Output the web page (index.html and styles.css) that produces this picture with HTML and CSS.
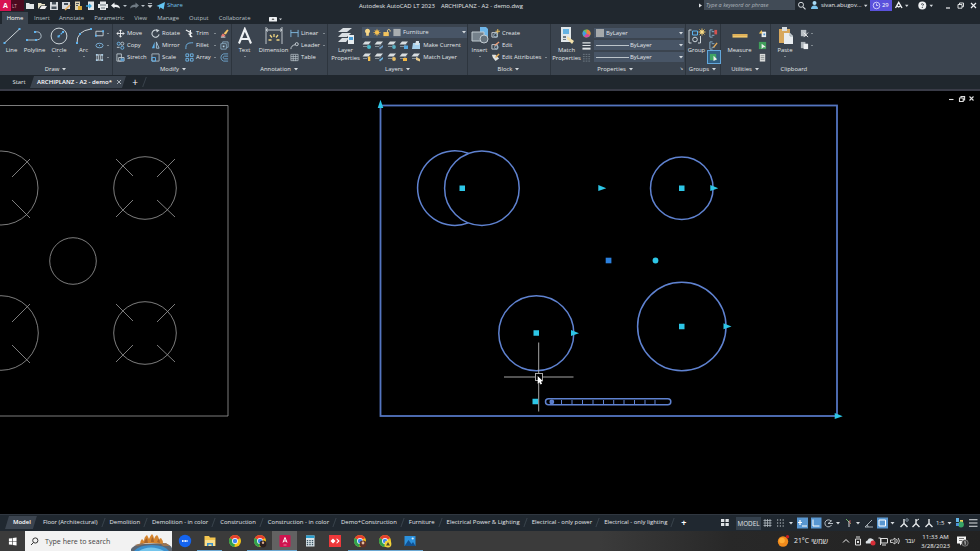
FILE: index.html
```html
<!DOCTYPE html>
<html lang="en">
  <head>
    <meta charset="UTF-8" />
    <meta name="viewport" content="width=device-width, initial-scale=1.0" />
    <title>Autodesk AutoCAD LT 2023 - ARCHIPLANZ - A2 - demo.dwg</title>
    <link rel="stylesheet" href="styles.css">
  </head>
  <body>
    <!-- shared icons -->
    <svg class="sprite">
      <symbol id="caret" viewBox="0 0 6 6"><path d="M1 2h4L3 4.6z" fill="#d5dade" /></symbol>
      <symbol id="layer" viewBox="0 0 10 10">
        <path d="M3 1.500h6L6.500 4.500H.5z" fill="#d8dde0" /><path d="M1 6.500l4 0 2-2" stroke="#98a2aa" fill="none" stroke-width=".8" />
      </symbol>
      <symbol id="chrome" viewBox="0 0 14 14">
        <circle cx="7" cy="7" r="6" fill="#f5c518" />
        <path d="M7 7L1.800 4A6 6 0 0 1 12.200 4z" fill="#e5402f" />
        <path d="M7 7L1.800 4A6 6 0 0 0 6.500 13z" fill="#2fa14f" />
        <circle cx="7" cy="7" r="2.900" fill="#fff" /><circle cx="7" cy="7" r="2.200" fill="#4285f4" />
      </symbol>
    </svg>

    <header class="titlebar">
      <div class="app-button"><b>A</b><span>LT</span></div>
      <div class="quick">
        <svg width="12" viewBox="0 0 12 12"><path d="M2 3h3l1 1h4v5H2z" fill="#e2e6e8" /></svg>
        <svg width="12" viewBox="0 0 12 12"><path d="M2 9V3h3l1 1h3v1.500H5z" fill="#e8e3c8" /><path d="M3.500 9L5.500 6H11L9 9z" fill="#eee" /></svg>
        <svg width="12" viewBox="0 0 12 12"><path d="M2 2h8v8H2z" fill="#d6dade" /><path d="M4 2h4v2.500H4zM3.500 6.500h5V9h-5z" fill="#46515a" /></svg>
        <svg width="12" viewBox="0 0 12 12"><path d="M2 2h8v7H2z" fill="#d6dade" /><path d="M4 3h4v2H4z" fill="#46515a" /><path d="M5 10l5-5" stroke="#e9ae58" stroke-width="1.600" /></svg>
        <svg width="12" viewBox="0 0 12 12"><path d="M3 1.500h5V10H3z" fill="#ded3b1" /><path d="M6 6h4v4H6z" fill="#d6a736" /><path d="M4 3.500h3M4 5.500h2" stroke="#50585d" /></svg>
        <svg width="13" viewBox="0 0 13 12"><path d="M4 1.500h6V10H4z" fill="#e2e6e8" /><path d="M2 6h5M5 4l2 2-2 2" stroke="#3aa7dc" stroke-width="1.300" fill="none" /></svg>
        <svg width="12" viewBox="0 0 12 12"><path d="M3 1.500h6V4h2v4H9v2H3V8H1V4h2z" fill="#e4e8ea" /><path d="M3 5h6M4 8h4" stroke="#68747c" /></svg>
        <svg width="13" viewBox="0 0 13 12"><path d="M2 5.500l3.500-3v2q5 0 5.500 4-2-2-5.500-1.500v1.500z" fill="#eef1f3" /></svg>
        <svg width="6" viewBox="0 0 6 12"><path d="M1 5h4L3 7z" fill="#b7c0c6" /></svg>
        <svg width="13" viewBox="0 0 13 12"><path d="M11 5.500l-3.500-3v2q-5 0-5.500 4 2-2 5.500-1.500v1.500z" fill="#6f7a83" /></svg>
        <svg width="6" viewBox="0 0 6 12"><path d="M0 5h4L2 7z" fill="#b7c0c6" /></svg>
        <svg width="9" viewBox="0 0 9 12"><path d="M1 3.500h4M1 5.500h4L3 7.600z" stroke="#d5dade" fill="#d5dade" stroke-width=".7" /></svg>
        <svg class="plane" width="9" viewBox="0 0 9 12"><path d="M.5 6L9 2 7.600 9.500 4.500 7.600 3.400 9.500 3 6.800z" fill="#63c4f1" /></svg>
        <span class="share">Share</span>
      </div>
      <div class="doc-title"><span>Autodesk AutoCAD LT 2023</span><span>ARCHIPLANZ - A2 - demo.dwg</span></div>
      <div class="info">
        <svg width="6" viewBox="0 0 6 12"><path d="M2 3.500l3 2-3 2z" fill="#dfe3e6" /></svg>
        <div class="keyword">Type a keyword or phrase</div>
        <svg width="14" viewBox="0 0 14 12"><circle cx="6" cy="4.800" r="2.500" fill="none" stroke="#d5dade" /><path d="M8 6.800l2.500 2.500" stroke="#d5dade" stroke-width="1.200" /></svg>
        <svg width="12" viewBox="0 0 12 12"><circle cx="5.500" cy="3" r="2" fill="#a9dcf7" /><path d="M2 9q0-3.500 3.500-3.500T9 9z" fill="#7cc4ec" /></svg>
        <span class="user">sivan.abugov...</span>
        <svg width="8" viewBox="0 0 8 12"><path d="M2 4.800h3.500L3.700 7z" fill="#d5dade" /></svg>
        <div class="trial">
          <svg width="9" viewBox="0 0 9 9"><circle cx="4.500" cy="4.500" r="3.300" fill="none" stroke="#e7e6ff" stroke-width=".8" /><path d="M4.500 2.500v2h1.700" stroke="#e7e6ff" fill="none" stroke-width=".8" /></svg>
          <span>29</span>
        </div>
        <svg width="20" viewBox="0 0 20 12"><path d="M3.500 8L6.700 2.500 10 8M5 6l1.700 1L8.500 6" stroke="#f0f2f4" fill="none" stroke-width="1.400" /><path d="M13 4.800h3.500L14.800 7z" fill="#d5dade" /></svg>
        <svg class="help-icon" width="20" viewBox="0 0 20 12"><circle cx="6.300" cy="5.500" r="4" fill="#eef0f2" /><path d="M5 4.500q1.300-1.500 2.400-.3Q8 5 6.300 6M6.300 7v1" stroke="#1f272f" fill="none" stroke-width=".8" /><path d="M13.500 4.800H17L15.300 7z" fill="#d5dade" /></svg>
        <svg class="window-buttons" width="38" viewBox="0 0 38 12"><path d="M5 8h4" stroke="#eef0f2" stroke-width="1.200" /><path d="M17 4.500h4v3.700h-4zM18.500 4.500V3h4v3.700H21" stroke="#eef0f2" fill="none" stroke-width=".9" /><path d="M30 3l5 5M35 3l-5 5" stroke="#eef0f2" stroke-width="1.200" /></svg>
      </div>
    </header>

    <nav class="ribbon-tabs">
      <span class="tab active">Home</span>
      <span class="tab">Insert</span>
      <span class="tab">Annotate</span>
      <span class="tab">Parametric</span>
      <span class="tab">View</span>
      <span class="tab">Manage</span>
      <span class="tab">Output</span>
      <span class="tab">Collaborate</span>
      <svg width="16" height="12" viewBox="0 0 16 12"><rect x="0" y="5" width="8" height="4.600" rx=".6" fill="#edf0f2" /><path d="M2.500 7.800l1.500-1.500 1.500 1.500z" fill="#333" /><path d="M10 6.500h3l-1.500 1.800z" fill="#d5dade" /></svg>
    </nav>

    <section class="ribbon">
      <div class="panel draw">
        <div class="panel-body">
          <button class="big"><svg viewBox="0 0 18 18"><path d="M1.500 16L16.500 2" stroke="#cfd6da" /><path d="M.5 15h2v2h-2zM15.500 1h2v2h-2z" fill="#5db3ef" /></svg>Line</button>
          <button class="big"><svg viewBox="0 0 18 18"><path d="M1 13h10q5-1 4-5-1-4-6-3" stroke="#aab8c2" fill="none" /><path d="M0 12h2v2H0zM9 12h2v2H9zM8 4h2v2H8z" fill="#5db3ef" /></svg>Polyline</button>
          <button class="big"><svg viewBox="0 0 18 18"><circle cx="9" cy="9" r="7.900" stroke="#ccd4d9" fill="none" /><path d="M8.500 9.500L13 5" stroke="#5db3ef" stroke-width="1.200" stroke-dasharray="2 1" /><path d="M7.500 8.500h2v2h-2zM12 4h2v2h-2z" fill="#5db3ef" /></svg>Circle<i class="drop"></i></button>
          <button class="big"><svg viewBox="0 0 18 18"><path d="M2 16Q1.500 4 16 2" stroke="#ccd4d9" fill="none" /><path d="M1 15h2v2H1zM4 6h2v2H4zM15 1h2v2h-2z" fill="#5db3ef" /></svg>Arc<i class="drop"></i></button>
          <div class="stack">
            <span><svg viewBox="0 0 10 10"><path d="M1 2.500h8v5H1z" stroke="#ccd4d9" fill="none" /><path d="M0 6.500h2v2H0zM8 1.500h2v2H8z" fill="#5db3ef" /></svg><i class="drop"></i></span>
            <span><svg viewBox="0 0 10 10"><ellipse cx="5" cy="5" rx="4" ry="2.500" stroke="#7fb5dc" fill="none" /><path d="M4.500 4.500h1v1h-1z" fill="#5db3ef" /></svg><i class="drop"></i></span>
            <span><svg viewBox="0 0 10 10"><path d="M2 2h6v6H2zM4 2v6M6 2v6" stroke="#b9c3ca" fill="none" /><path d="M1 1h2v2H1zM7 1h2v2H7zM1 7h2v2H1zM7 7h2v2H7z" fill="#a9cce4" /></svg><i class="drop"></i></span>
          </div>
        </div>
        <div class="caption">Draw <svg><use href="#caret" /></svg></div>
      </div>

      <div class="panel modify">
        <div class="panel-body">
          <div class="stack col-a">
            <span><svg viewBox="0 0 10 10"><path d="M5 1v8M1 5h8M3.500 2.500L5 1l1.500 1.500M3.500 7.500L5 9l1.500-1.500M2.500 3.500L1 5l1.500 1.500M7.500 3.500L9 5 7.500 6.500" stroke="#eef1f3" fill="none" /></svg>Move</span>
            <span><svg viewBox="0 0 10 10"><circle cx="3" cy="3" r="1.700" stroke="#71b8ea" fill="none" /><circle cx="7" cy="3" r="1.700" stroke="#bcc6cd" fill="none" /><circle cx="7" cy="7.500" r="1.700" stroke="#71b8ea" fill="none" /><path d="M1 7h3" stroke="#ccd4d9" /></svg>Copy</span>
            <span><svg viewBox="0 0 10 10"><path d="M1 1h5v8H1zM3 5h6v4H3z" stroke="#bcc6cd" fill="none" /><path d="M5 6h4v3H5z" fill="#5c9cce" /></svg>Stretch</span>
          </div>
          <div class="stack col-b">
            <span><svg viewBox="0 0 10 10"><path d="M7.500 2A4 4 0 1 0 9 6" stroke="#ccd4d9" fill="none" stroke-width="1.200" /><path d="M5.500 0l4 1.500-3 2.500z" fill="#ccd4d9" /></svg>Rotate</span>
            <span><svg viewBox="0 0 10 10"><path d="M4 1v7H1z" fill="#5db3ef" /><path d="M6 1v7h3z" fill="none" stroke="#a9c7dc" /></svg>Mirror</span>
            <span><svg viewBox="0 0 10 10"><path d="M1 1h8v8H1z" stroke="#aab8c2" fill="none" /><path d="M1 5h4v4H1z" stroke="#5db3ef" fill="none" /></svg>Scale</span>
          </div>
          <div class="stack col-c">
            <span><svg viewBox="0 0 10 10"><path d="M1 1l7 4M6 1v8M4 5l4 4" stroke="#eef1f3" stroke-width="1.300" /></svg><em>Trim</em><i class="drop"></i></span>
            <span><svg viewBox="0 0 10 10"><path d="M1 9V7q0-5 6-5h2" stroke="#71b8ea" fill="none" /></svg><em>Fillet</em><i class="drop"></i></span>
            <span><svg viewBox="0 0 10 10"><path d="M1 1h3v3H1zM6 1h3v3H6zM1 6h3v3H1zM6 6h3v3H6z" stroke="#71b8ea" fill="none" /></svg><em>Array</em><i class="drop"></i></span>
          </div>
          <div class="stack">
            <span><svg viewBox="0 0 10 10"><path d="M4 5l4-4.500 1.500 1L6.500 6z" fill="#f4c465" /><path d="M3 5l3 2-2 2-3-1z" fill="#ec796f" /><path d="M1 9h5" stroke="#eee" /></svg></span>
            <span><svg viewBox="0 0 10 10"><path d="M1 3h6v6H1zM3 3V1h6v6H7" stroke="#88a9c1" fill="none" /><path d="M3 5h2v2H3z" fill="#b3d3e9" /></svg></span>
            <span><svg viewBox="0 0 10 10"><path d="M9 1H4Q1 2 1 5t3 4h5M9 3.500H5Q3.500 4 3.500 5T5 6.500h4" stroke="#71a9d2" fill="none" /></svg></span>
          </div>
        </div>
        <div class="caption">Modify <svg><use href="#caret" /></svg></div>
      </div>

      <div class="panel annotation">
        <div class="panel-body">
          <button class="big"><svg viewBox="0 0 18 18"><path d="M3 16.500L8.800 2 15 16.500M5.200 12h7.300" stroke="#eef1f3" stroke-width="2.100" fill="none" /></svg>Text<i class="drop"></i></button>
          <button class="big dimension"><svg viewBox="0 0 18 18"><path d="M1 0v17M17 0v17M1 3h16M3 1.500L1 3l2 1.500M15 1.500L17 3l-2 1.500" stroke="#cfd6da" fill="none" stroke-width=".9" /><path d="M9 7v3M5 8l2 2.500M13 8l-2 2.500M3.500 13h3M11.500 13h3" stroke="#efd481" stroke-width="1.300" /></svg>Dimension</button>
          <div class="stack">
            <span><svg viewBox="0 0 10 10"><path d="M1 1v8M9 1v8M1 4h8" stroke="#83bce5" fill="none" /></svg><em>Linear</em><i class="drop"></i></span>
            <span><svg viewBox="0 0 10 10"><path d="M1 9q0-4 5-5" stroke="#ccd4d9" fill="none" /><circle cx="7.500" cy="3.500" r="1.700" stroke="#ccd4d9" fill="none" /></svg><em>Leader</em><i class="drop"></i></span>
            <span><svg viewBox="0 0 10 10"><path d="M1 1.500h8v7H1zM1 4h8M1 6.300h8M3.600 2v7M6.300 2v7" stroke="#b9c3ca" fill="none" stroke-width=".8" /></svg>Table</span>
          </div>
        </div>
        <div class="caption">Annotation <svg><use href="#caret" /></svg></div>
      </div>

      <div class="panel layers">
        <div class="panel-body">
          <button class="big"><svg viewBox="0 0 18 18"><path d="M6 1h9l-5 4H1zM5 6h9l-4 4H1zM5 11h7l-3 4H1z" fill="#d9dee2" /><path d="M11 8h6v9h-6z" fill="#e8edf0" /><path d="M12 10h4v3h-4z" fill="#4a9ed8" /></svg>Layer<br />Properties</button>
          <div class="layer-tools">
            <div class="combo">
              <svg width="9" viewBox="0 0 9 10"><path d="M4.500.8a2.700 2.700 0 0 1 1.500 5v2.700H3V5.800a2.700 2.700 0 0 1 1.500-5z" fill="#f8d888" /></svg>
              <svg width="10" viewBox="0 0 10 10"><circle cx="5" cy="5" r="2.400" fill="#f5c052" /><path d="M5 1v8M1 5h8M2.200 2.200l5.600 5.600M7.800 2.200L2.200 7.800" stroke="#f5c052" stroke-width=".7" /></svg>
              <svg width="10" viewBox="0 0 10 10"><path d="M1 4.500h6V9H1z" fill="#f3c35d" /><path d="M5.500 5V2.500q1.500-2 3 0V4" stroke="#f3d895" fill="none" /></svg>
              <svg width="10" viewBox="0 0 10 10"><path d="M1 1h8v8H1z" fill="#a9aeb0" /></svg>
              <span>Furniture</span>
              <svg class="caret"><use href="#caret" /></svg>
            </div>
            <div class="layer-row">
              <svg viewBox="0 0 10 10"><use href="#layer" /><circle cx="7" cy="7" r="2" fill="#46bacb" /></svg>
              <svg viewBox="0 0 10 10"><use href="#layer" /><path d="M5 8l4-3v2L6 9.500z" fill="#6f9cc4" /></svg>
              <svg viewBox="0 0 10 10"><use href="#layer" /><circle cx="7" cy="7" r="1.900" fill="#57b1c3" /></svg>
              <svg viewBox="0 0 10 10"><use href="#layer" /><path d="M5 5.500h4v3.500H5z" fill="#54a8e2" /></svg>
              <svg viewBox="0 0 10 10"><path d="M2 3h7v6H1z" fill="#a6d1ed" /><path d="M5 1h3v4H4z" fill="#d6e1e8" /></svg>
              <span>Make Current</span>
            </div>
            <div class="layer-row">
              <svg viewBox="0 0 10 10"><use href="#layer" /><path d="M6 4.500h2.300V9H6z" fill="#f5c052" /></svg>
              <svg viewBox="0 0 10 10"><use href="#layer" /><path d="M5 8l4-3v2L6 9.500z" fill="#6eb2dc" /></svg>
              <svg viewBox="0 0 10 10"><use href="#layer" /><circle cx="7" cy="7" r="1.900" fill="#e8be63" /></svg>
              <svg viewBox="0 0 10 10"><use href="#layer" /><path d="M4 6h4v3H4z" fill="#f3b946" /></svg>
              <svg viewBox="0 0 10 10"><use href="#layer" /><path d="M5 5l4 2v2.500L5 8z" fill="#e8ca8c" /></svg>
              <span>Match Layer</span>
            </div>
          </div>
        </div>
        <div class="caption">Layers <svg><use href="#caret" /></svg></div>
      </div>

      <div class="panel block">
        <div class="panel-body">
          <button class="big"><svg viewBox="0 0 18 18"><path d="M9 0h6l2 2v10H9z" fill="#6fb6e9" /><path d="M1 5h12v9H1z" fill="#75818b" stroke="#c2cbd1" /><circle cx="13" cy="12" r="4" fill="#66727c" stroke="#c2cbd1" /></svg>Insert<i class="drop"></i></button>
          <div class="stack">
            <span><svg viewBox="0 0 10 10"><path d="M1 4h6v5H1z" stroke="#ccd4d9" fill="none" /><circle cx="5" cy="7" r="2" stroke="#9bb9cc" fill="none" /><path d="M7.500 0v5M5 2.500h5" stroke="#f0c45c" /></svg>Create</span>
            <span><svg viewBox="0 0 10 10"><path d="M1 4h6v5H1z" stroke="#ccd4d9" fill="none" /><circle cx="6" cy="7" r="2" stroke="#9bb9cc" fill="none" /><path d="M4 5l5-4" stroke="#ee9d76" stroke-width="1.400" /></svg>Edit</span>
            <span><svg viewBox="0 0 10 10"><path d="M1 2h4l4 4-4 3-3-4z" fill="#e0e3e2" /><path d="M5 5l4-4" stroke="#e9ae58" stroke-width="1.600" /></svg>Edit Attributes<i class="drop"></i></span>
          </div>
        </div>
        <div class="caption">Block <svg><use href="#caret" /></svg></div>
      </div>

      <div class="panel properties">
        <div class="panel-body">
          <button class="big"><svg viewBox="0 0 18 18"><path d="M3 0h10v15H3z" fill="#e1e7ea" /><path d="M5 2h6v5H5z" fill="#65b3e3" /><path d="M5 9h3v2H5zM5 12h3v1H5z" fill="#707d86" /><path d="M9 9l7 5-2 3-5-5z" fill="#f3e1ac" /></svg>Match<br />Properties</button>
          <div class="stack prop-icons">
            <span><svg viewBox="0 0 10 10"><circle cx="5" cy="5" r="4.400" fill="#67c25d" /><path d="M5 5V.6A4.400 4.400 0 0 1 9 7z" fill="#f0803f" /><path d="M5 5L9 7A4.400 4.400 0 0 1 2 8z" fill="#d7479d" /><path d="M5 5L2 8A4.400 4.400 0 0 1 2 2z" fill="#4498e8" /></svg></span>
            <span><svg viewBox="0 0 10 10"><path d="M.5 2h9M.5 5h9" stroke="#dfe3e5" stroke-width="1.300" /><path d="M.5 8.500h9" stroke="#dfe3e5" stroke-width="2.200" /></svg></span>
            <span><svg viewBox="0 0 10 10"><path d="M1 1.500h8M1 4h8M1 6.500h8M1 9h8" stroke="#78838c" stroke-dasharray="2 1" stroke-width=".9" /></svg></span>
          </div>
          <div class="prop-combos">
            <div class="combo"><i class="swatch"></i><span>ByLayer</span><svg class="caret"><use href="#caret" /></svg></div>
            <div class="combo"><i class="rule"></i><span>ByLayer</span><svg class="caret"><use href="#caret" /></svg></div>
            <div class="combo"><i class="rule"></i><span>ByLayer</span><svg class="caret"><use href="#caret" /></svg></div>
          </div>
        </div>
        <div class="caption">Properties <svg><use href="#caret" /></svg><b class="launcher">&#x2198;</b></div>
      </div>

      <div class="panel groups">
        <div class="panel-body">
          <button class="big"><svg viewBox="0 0 18 18"><path d="M3.500 3H1v13h2.500M10 16h2.500V9" stroke="#ccd4d9" fill="none" /><path d="M4.500 4h5v4h-5z" stroke="#5db3ef" fill="none" /><circle cx="7" cy="12.500" r="2.300" stroke="#ccd4d9" fill="none" /><path d="M14 1.500v7M10.500 5h7M11.500 2.500l5 5M16.500 2.500l-5 5" stroke="#f4cb67" stroke-width=".9" /><circle cx="14" cy="5" r="1.800" fill="#f8dc8c" /></svg>Group</button>
          <div class="stack">
            <span><svg viewBox="0 0 10 10"><path d="M4 1H1v8h3M3 3h3M3 7h3" stroke="#8bb6d4" fill="none" /><path d="M6 1h3v5H6z" fill="#d65250" /></svg></span>
            <span><svg viewBox="0 0 10 10"><path d="M4 1H1v8h3M3 3h3M3 7h3" stroke="#8bb6d4" fill="none" /><path d="M5 7l4-5" stroke="#e9ae58" stroke-width="1.500" /></svg></span>
            <span class="pressed"><svg viewBox="0 0 10 10"><path d="M1 1h7v7H1z" fill="#40a563" /><path d="M5 3v6l4-2z" fill="#eee" /></svg></span>
          </div>
        </div>
        <div class="caption">Groups <svg><use href="#caret" /></svg></div>
      </div>

      <div class="panel utilities">
        <div class="panel-body">
          <button class="big"><svg viewBox="0 0 18 18"><path d="M1.500 7h15v3.600h-15z" fill="#f2c76b" /><path d="M3 7v2M5 7v2M7 7v2M9 7v2M11 7v2M13 7v2M15 7v2" stroke="#b38231" stroke-width=".6" /></svg>Measure<i class="drop"></i></button>
          <div class="stack">
            <span><svg viewBox="0 0 10 10"><path d="M4 3h5v6H4z" fill="#e8edf0" /><path d="M1 5h4L4 1z" fill="#f0c45c" /><path d="M6 5h2v2H6z" fill="#4b91ca" /></svg></span>
            <span><svg viewBox="0 0 10 10"><path d="M1 1h8v8H1z" fill="#3f9e5a" /><path d="M4 3v6l2-2h3z" fill="#eee" /></svg></span>
            <span><svg viewBox="0 0 10 10"><path d="M2 1h6v8.500H2z" fill="#d9dbda" /><path d="M3 3h4M3 5h4M3 7h4" stroke="#7b8183" stroke-width=".8" /></svg></span>
          </div>
        </div>
        <div class="caption">Utilities <svg><use href="#caret" /></svg></div>
      </div>

      <div class="panel clipboard">
        <div class="panel-body">
          <button class="big"><svg viewBox="0 0 18 18"><path d="M3 2h11v14H3z" fill="#d8a85d" /><path d="M6 0h5v4H6z" fill="#d9dee2" /><path d="M8 6h6l3 3v8H8z" fill="#e9edf0" /><path d="M14 6v3h3" stroke="#9ca6ac" fill="none" /></svg>Paste<i class="drop"></i></button>
          <div class="stack">
            <span><svg viewBox="0 0 10 10"><path d="M1 1h6v7H1z" fill="#b9c0c5" /><path d="M4 4l5 5M9 4L4 9" stroke="#eee" /></svg><i class="drop"></i></span>
            <span><svg viewBox="0 0 10 10"><path d="M1 1h5v7H1z" fill="#aeb5ba" /><path d="M4 3h5v6H4z" fill="#eceff1" /></svg><i class="drop"></i></span>
          </div>
        </div>
        <div class="caption">Clipboard</div>
      </div>
    </section>

    <div class="file-tabs">
      <span class="file-tab start">Start</span>
      <span class="file-tab current">ARCHIPLANZ - A2 - demo* <svg viewBox="0 0 6 6"><path d="M1 1l4 4M5 1L1 5" stroke="#c4cbd0" stroke-width=".8" /></svg></span>
      <span class="new-tab">+</span>
      <i class="slash"></i>
    </div>

    <!-- model space; the viewBox keeps window coordinates -->
    <main class="drawing">
      <svg width="980" height="423" viewBox="0 91 980 423">
        <g class="plain">
          <path d="M0 105.500H228V416H0" />
          <circle cx="1" cy="188" r="37" />
          <circle cx="145" cy="188" r="31.300" />
          <circle cx="73" cy="261" r="23.300" />
          <circle cx="1" cy="333" r="37.300" />
          <circle cx="145" cy="333" r="31.300" />
          <path d="M12 177L30 159M12 200L30 218M116 159l17 17M175 159l-18 18M116 217l17-17M175 217l-18-17" />
          <path d="M12 322L30 304M12 345L30 363M116 304l17 17M175 304l-18 18M116 362l17-17M175 362l-18-17" />
        </g>
        <g class="selected">
          <rect class="outline" x="380.500" y="105.500" width="456.500" height="310.500" />
          <path d="M468.300 153.300a37.300 37.300 0 1 0 0 69.600" />
          <circle cx="481.900" cy="188.200" r="37.300" />
          <circle cx="681.800" cy="188.200" r="31.300" />
          <circle cx="536.300" cy="333.200" r="37.500" />
          <circle cx="681.800" cy="326.500" r="44.200" />
          <rect x="545.500" y="398.700" width="125.300" height="6" rx="3" />
          <circle class="knob" cx="551.800" cy="401.900" r="1.700" />
          <path class="ticks" d="M561.500 400v4M572 400v4M582.500 400v4M593 400v4M603.500 400v4M613.700 400v4M624 400v4M634.500 400v4M645 400v4M655 400v4" />
        </g>
        <g class="grips">
          <path d="M459.500 185.500h5.500v5.500h-5.500zM679 185.500h5.500v5.500H679zM533.500 330.300h5.500v5.500h-5.500zM679 323.800h5.500v5.500H679zM532.500 398.800h5.500v5.500h-5.500z" />
          <path d="M598.300 185v6l8-2.800zM710.300 185v6l8-2.800zM571 330v6l8-2.800zM723.500 323.300v6l8-2.800zM834.700 413v6l8-2.800zM377.700 108h5.600L380.500 99.700z" />
          <circle cx="655.500" cy="260.500" r="2.900" />
          <path class="base" d="M605.700 257.700h5.700v5.600h-5.700z" />
        </g>
        <g class="crosshair">
          <path d="M504 377h31.500M542.500 377H573.500M538.700 342.500v31M538.700 381v30.500" />
          <rect x="535.500" y="373.500" width="7" height="7" />
          <path class="pointer" d="M537.700 376v7.800l1.600-1.500 1.300 2.300 1.500-.8-1.200-2.200 2.100-.4z" />
        </g>
        <g class="mdi">
          <path d="M949 99.500h4.500" />
          <path d="M959.500 98h3.700v3.500h-3.700zM961 98v-1.500h3.600v3.400H963" />
          <path d="M969.500 96.500l4 4M973.500 96.500l-4 4" />
        </g>
      </svg>
    </main>

    <div class="layout-bar">
      <div class="layout-tabs">
        <span class="active">Model</span>
        <span>Floor (Architectural)</span>
        <span>Demolition</span>
        <span>Demolition - in color</span>
        <span>Construction</span>
        <span>Construction - in color</span>
        <span>Demo+Construction</span>
        <span>Furniture</span>
        <span>Electrical Power &amp; Lighting</span>
        <span>Electrical - only power</span>
        <span>Electrical - only lighting</span>
        <b>+</b>
      </div>
      <div class="status">
        <svg width="18" viewBox="0 0 18 16"><path d="M3 4h3.300v3H3zM7.500 4h3.300v3H7.500zM3 8h3.300v3H3zM7.500 8h3.300v3H7.500z" fill="#dfe3e6" /></svg>
        <span class="model-button">MODEL</span>
        <svg width="13" viewBox="0 0 13 16"><path d="M4 4v8M6.500 4v8M9 4v8M2.500 5.500h8M2.500 8h8M2.500 10.500h8" stroke="#aeb8bf" stroke-width=".8" /></svg>
        <svg width="22" viewBox="0 0 22 16"><path d="M3 5h8M3 8h8M3 11h8" stroke="#c7cfd5" stroke-width="1.100" stroke-dasharray="1.200 1.600" /><path d="M15 7h4l-2 2.400z" fill="#d5dade" /></svg>
        <svg width="14" viewBox="0 0 14 16"><path d="M1 2.500h11v11H1z" fill="#5997d1" /><path d="M4 5v5M2 7.500h4M6 11h5" stroke="#fff" stroke-width="1.200" /></svg>
        <svg width="13" viewBox="0 0 13 16"><path d="M1 2.500h10.500v11H1z" fill="#5997d1" /><path d="M3 4.500V11h6.500" stroke="#fff" fill="none" /></svg>
        <svg width="20" viewBox="0 0 20 16"><path d="M8 6A3.500 3.500 0 1 0 8.500 10M5 8.500l4-3M5 8.500h5" stroke="#c7cfd5" fill="none" stroke-width=".9" /><path d="M13 7h4l-2 2.400z" fill="#d5dade" /></svg>
        <svg width="20" viewBox="0 0 20 16"><path d="M3 4l5 5" stroke="#72b967" /><path d="M6 6v6" stroke="#d5dade" /><path d="M7 5v4" stroke="#ad5054" /><path d="M13 7h4l-2 2.400z" fill="#d5dade" /></svg>
        <svg width="13" viewBox="0 0 13 16"><path d="M9 5l-7 7h8M5 12q0-2-1-2" stroke="#c7cfd5" fill="none" stroke-width=".8" /></svg>
        <svg width="22" viewBox="0 0 22 16"><path d="M1 2.500h11v11H1z" fill="#5997d1" /><path d="M3 5h6.500v6H3z" stroke="#fff" fill="none" /><path d="M14.500 7h4l-2 2.400z" fill="#d5dade" /></svg>
        <svg width="38" viewBox="0 0 38 16"><path d="M6 4v4.500L2.500 12M6 8.500l3.500 3.500M18 4v4.500l-3.500 3.500M18 8.500l3.500 3.500M31 4v4.500l-3.500 3.500M31 8.500l3.500 3.500" stroke="#e6eaec" fill="none" stroke-width="1.400" /><circle cx="9" cy="5" r="1.300" stroke="#9fb2c0" fill="none" stroke-width=".7" /><path d="M18 6l3-2" stroke="#e6eaec" /></svg>
        <span class="scale">1:5</span>
        <svg width="7" viewBox="0 0 7 16"><path d="M1.500 7h4l-2 2.400z" fill="#d5dade" /></svg>
        <svg width="13" viewBox="0 0 13 16"><path d="M3 3h3v4H3z" fill="#65b7e8" /><path d="M7 5h3v3H7z" fill="#f0cc55" /><circle cx="8" cy="9.500" r="2.900" fill="#38a567" /><path d="M3 8h3v3H3z" fill="#4c94d8" /></svg>
        <svg width="14" viewBox="0 0 14 16"><path d="M3 4.800h8.500M3 8h8.500M3 11.300h8.500" stroke="#dfe3e6" stroke-width="1.100" /></svg>
      </div>
    </div>

    <footer class="taskbar">
      <svg class="windows" viewBox="0 0 10 10"><path d="M1 1.800l3.500-.5v3.400H1zM5.200 1.200L9.500.6v4.100H5.200zM1 5.300h3.500v3.400L1 8.200zM5.200 5.300h4.300v4.100l-4.300-.6z" fill="#fff" /></svg>
      <div class="search">
        <svg width="9" height="9" viewBox="0 0 9 9"><circle cx="5.300" cy="3.500" r="2.600" fill="none" stroke="#333" /><path d="M3.500 5.500L1 8" stroke="#333" /></svg>
        <span>Type here to search</span>
        <svg class="scene" width="41" height="19" viewBox="0 0 41 19"><path d="M0 17q3-4 9-5l23-1q7 1 9 5v3H0z" fill="#5d6672" /><path d="M3 19q5-6 18-6t17 6z" fill="#3b8fcc" /><path d="M8 19q5-3.500 12-3.500T33 19z" fill="#74c5ec" /><path d="M9 12q0-3 2-5 1 1 2 2 0-4 3-6 1 2 2 4 1-3 3-5 2 2 2 5 1-3 3-4 2 2 2 5 1-2 2-2 2 2 2 6-12-2-23 0z" fill="#d5852f" /><path d="M13 11q1-4 3-5l1 5zM20 10q0-4 2-5l1 5zM26 10l2-4 1 5z" fill="#a8652b" /><path d="M4 13l7-2 3 1-8 2zM30 12l5-1 4 3-7 0z" fill="#9a7453" /></svg>
      </div>
      <div class="apps">
        <span><svg viewBox="0 0 14 14"><circle cx="7" cy="7" r="6.200" fill="#1464f0" /><path d="M4 7h6" stroke="#dce9ff" stroke-width="1.800" stroke-dasharray="1.100 .4" /></svg></span>
        <span class="open"><svg viewBox="0 0 14 14"><path d="M1.500 2H6l1 1.500h5.500V12h-11z" fill="#f5c64f" /><path d="M2 6h10v6H2z" fill="#fbe08f" /><path d="M4 9h6v3H8.500v-1.500h-3V12H4z" fill="#3c91cc" /></svg></span>
        <span><svg><use href="#chrome" /></svg></span>
        <span class="open"><svg viewBox="0 0 14 14"><use href="#chrome" /><circle cx="10" cy="10" r="3.400" fill="#2b2020" /><circle cx="10" cy="8.800" r="1.200" fill="#d9a88c" /></svg></span>
        <span class="open focused"><svg viewBox="0 0 14 14"><rect x="1.500" y="1" width="11" height="12" rx="1" fill="#d0134f" /><path d="M5 8.500L7 3.500l2 5M5.800 7h2.500" stroke="#fff" fill="none" /><path d="M5.500 11h3" stroke="#f0a4bd" stroke-width=".8" /></svg></span>
        <span><svg viewBox="0 0 14 14"><path d="M3 1.500h8.500v11H3z" fill="#d9e5ea" /><path d="M3 1.500h8.500V4H3z" fill="#2a9dcc" /><path d="M4.500 6v6M7 6v6M9.500 6v6" stroke="#3e5665" stroke-width="1.400" stroke-dasharray="1.200 .7" /></svg></span>
        <span><svg viewBox="0 0 14 14"><path d="M1 1h12v12H1z" fill="#ee383a" /><path d="M2.500 7L5 4.500 7.500 7 5 9.500zM8 4.700L9.300 4.700 11.700 7 9.300 9.300H8L10 7z" fill="#fff" /></svg></span>
        <span class="open"><svg viewBox="0 0 14 14"><use href="#chrome" /><circle cx="10" cy="10" r="3.400" fill="#5f3028" /><circle cx="10" cy="9" r="1.400" fill="#e6bb9c" /></svg></span>
        <span class="open"><svg viewBox="0 0 14 14"><use href="#chrome" /><circle cx="10" cy="10" r="3.400" fill="#f3d33c" /><path d="M10 8l2 3.500H8z" fill="#4b472b" /></svg></span>
        <span class="open"><svg viewBox="0 0 14 14"><path d="M1.500 2h11v10h-11z" fill="#2b91dd" /><path d="M1.500 12l4-6 3 4 1.500-2 2.500 4z" fill="#12508f" /><circle cx="9.700" cy="4.500" r="1.100" fill="#d6efff" /></svg></span>
      </div>
      <div class="tray">
        <svg width="15" viewBox="0 0 15 14"><circle cx="7" cy="7.500" r="5.200" fill="#f08a1c" /><circle cx="6" cy="6.500" r="2.800" fill="#ffae35" /><circle cx="11.500" cy="2.700" r="1.700" fill="#c61d20" /></svg>
        <span class="temp">21°C</span>
        <span class="weather" dir="rtl">שמשי</span>
        <svg width="12" viewBox="0 0 12 14"><path d="M3 8.500L6 5.500l3 3" stroke="#eee" fill="none" /></svg>
        <svg width="12" viewBox="0 0 12 14"><path d="M4 3h4M3.500 5h5v6h-5z" stroke="#ddd" fill="none" /><path d="M5 7h2v2H5z" fill="#ddd" /></svg>
        <svg width="13" viewBox="0 0 13 14"><path d="M2 9.500q-1-2.500 1.500-3 1-3 4-2 2.500.5 2.500 3v2z" fill="#d9dfe3" /><circle cx="9" cy="9" r="2.500" fill="#d72e37" /></svg>
        <svg width="12" viewBox="0 0 12 14"><path d="M4 4.500h6.500v4.500H4zM1.500 4h2v7M5 11h4" stroke="#ddd" fill="none" /></svg>
        <svg width="14" viewBox="0 0 14 14"><path d="M1.500 6h2L6 4v6L3.500 8.500h-2z" stroke="#ddd" fill="none" stroke-width=".9" /><path d="M7.500 5q1.500 2 0 4M9.200 4q2.400 3 0 6" stroke="#ddd" fill="none" stroke-width=".9" /></svg>
        <span class="lang" dir="rtl">עבר</span>
        <div class="clock">11:33 AM<br />3/28/2023</div>
        <svg class="notify" width="16" viewBox="0 0 16 14"><path d="M3 2.500h9v7H8l-2 2v-2H3z" fill="#f4f4f4" /><path d="M5 4.500h5M5 6.500h3" stroke="#555" stroke-width=".8" /><circle cx="11" cy="9" r="3.200" fill="#333" stroke="#aaa" stroke-width=".6" /><path d="M10.300 8l.9-.6v3.300" stroke="#fff" fill="none" stroke-width=".7" /></svg>
      </div>
    </footer>
  </body>
</html>
```
FILE: styles.css
```css
* {
  box-sizing: border-box;
}
body {
  width: 980px;
  height: 551px;
  margin: 0;
  overflow: hidden;
  display: flex;
  flex-direction: column;
  background-color: #000;
  color: #e2e6e9;
  font-family: "Open Sans", "Noto Sans", "DejaVu Sans", sans-serif;
  font-size: 5.9px;
  line-height: 8px;
  white-space: nowrap;
}
svg {
  display: block;
  flex-shrink: 0;
}
.sprite {
  width: 0;
  height: 0;
  position: absolute;
}
em {
  font-style: normal;
}

/* title bar */
.titlebar {
  display: flex;
  height: 12px;
  flex-shrink: 0;
  background-color: #20272e;
}
.titlebar svg {
  height: 12px;
}
.app-button {
  display: flex;
  align-items: center;
  width: 24px;
  height: 11px;
  background-color: #4c0a20;
  color: #d9a1b0;
  font-size: 4.5px;
}
.app-button b {
  width: 11px;
  height: 11px;
  margin-right: 1px;
  line-height: 11px;
  text-align: center;
  font-size: 7px;
  color: #fff;
  background-color: #d81352;
}
.quick {
  display: flex;
  width: 335px;
}
.share {
  padding-left: 2px;
  line-height: 11px;
  color: #74c0e8;
}
.doc-title {
  display: flex;
  gap: 6px;
  width: 338px;
  line-height: 12px;
  font-size: 5.97px;
}
.info {
  display: flex;
  line-height: 11px;
}
.keyword {
  width: 91px;
  height: 10px;
  margin-left: 1px;
  padding-left: 2px;
  line-height: 10px;
  font-size: 5.5px;
  font-style: italic;
  color: #adb5bc;
  background-color: #414b56;
}
.user {
  width: 41px;
}
.trial {
  display: flex;
  align-items: center;
  width: 22px;
  height: 11px;
  padding-left: 2px;
  gap: 1px;
  color: #fff;
  background-color: #5a52dc;
}
.trial svg {
  height: 9px;
}
.help-icon {
  margin-left: 4px;
}
.window-buttons {
  margin-left: 5px;
}

/* ribbon */
.ribbon-tabs {
  display: flex;
  height: 12px;
  flex-shrink: 0;
  padding-left: 2px;
  background-color: #20272e;
  color: #b9c1c7;
}
.tab {
  height: 12px;
  margin-right: 6px;
  line-height: 13px;
}
.tab.active {
  width: 26px;
  margin-right: 4px;
  text-align: center;
  background-color: #3b444f;
  color: #fff;
}
.ribbon-tabs .tab + .tab {
  padding: 0 2px;
}
.ribbon-tabs .tab:nth-child(2) {
  margin-right: 5px;
}
.ribbon-tabs svg {
  margin-left: 11px;
}
.ribbon {
  display: flex;
  height: 51px;
  flex-shrink: 0;
  background-color: #3b444f;
}
.panel {
  display: flex;
  flex-direction: column;
  padding-top: 3px;
  border-right: 1px solid #2d353e;
}
.panel-body {
  display: flex;
  height: 36px;
}
.caption {
  display: flex;
  justify-content: center;
  align-items: center;
  gap: 2px;
  height: 11px;
}
.caption svg,
.combo .caret {
  width: 6px;
  height: 6px;
}
.big {
  display: flex;
  flex-direction: column;
  align-items: center;
  padding: 0;
  border: none;
  background: none;
  color: inherit;
  font: inherit;
  line-height: 8px;
}
.big svg {
  width: 18px;
  height: 18px;
  margin: 0 0 1px;
}
.drop {
  width: 0;
  height: 0;
  border: 1.3px solid transparent;
  border-top: 1.6px solid #c4cbd0;
  border-bottom: none;
}
.stack {
  display: flex;
  flex-direction: column;
}
.stack span {
  display: flex;
  align-items: center;
  height: 12.2px;
  gap: 2px;
}
.stack svg {
  width: 9px;
  height: 9px;
}
.big .drop {
  margin-top: 2px;
}

.draw {
  width: 113px;
}
.draw .big:nth-child(1) {
  width: 23px;
}
.draw .big:nth-child(2) {
  width: 23px;
}
.draw .big:nth-child(3) {
  width: 26px;
}
.draw .big:nth-child(4) {
  width: 23px;
}
.draw .stack span {
  gap: 3px;
}
.modify {
  width: 119px;
  padding-left: 3px;
}
.modify .col-a {
  width: 35px;
}
.modify .col-b {
  width: 34px;
}
.modify .col-c {
  width: 35px;
}
.modify em {
  width: 16px;
}
.annotation {
  width: 96px;
}
.annotation .big {
  width: 25px;
}
.annotation .big.dimension {
  width: 33px;
}
.annotation .stack em {
  width: 20px;
}
.layers {
  width: 140px;
  padding-left: 1px;
}
.layers .big {
  width: 33px;
}
.layer-tools {
  width: 105px;
}
.layer-row {
  display: flex;
  align-items: center;
  height: 12.2px;
  gap: 2px;
}
.layer-row svg {
  width: 10px;
  height: 10px;
}
.layer-row svg:nth-child(n + 2) {
  margin-left: 0.3px;
}
.combo {
  display: flex;
  align-items: center;
  height: 10px;
  margin-bottom: 2.2px;
  padding-left: 1px;
  background-color: #485566;
}
.combo span {
  flex: 1;
  padding-left: 1px;
}
.layer-tools .combo {
  height: 10.5px;
  margin-bottom: 1.7px;
}
.layer-tools .combo svg {
  height: 9px;
}
.layer-tools .combo .caret {
  height: 6px;
}
.block {
  width: 83px;
}
.block .big {
  width: 23px;
}
.block .stack .drop {
  margin-left: 2px;
}
.properties {
  width: 135px;
}
.properties .big {
  width: 31px;
}
.prop-icons {
  width: 12px;
}
.prop-combos {
  width: 90px;
  padding-top: 1px;
}
.swatch {
  width: 8px;
  height: 8px;
  margin: 0 1px;
  background-color: #a5a9ab;
}
.rule {
  width: 33px;
  height: 1px;
  margin-left: 1px;
  background-color: #bcc4ca;
}
.properties .caption {
  position: relative;
  padding-right: 5px;
}
.launcher {
  position: absolute;
  right: 2px;
  font-size: 4px;
}
.groups {
  width: 35px;
}
.groups .big {
  width: 21px;
  margin-right: 2px;
}
.groups .pressed {
  width: 12px;
  margin-left: -1px;
  padding-left: 1px;
  background-color: #315f83;
  outline: 0.6px solid #63a8dc;
}
.utilities {
  width: 50px;
}
.utilities .big {
  width: 37px;
}
.clipboard {
  flex: 1;
  border: none;
}
.clipboard .big {
  width: 28px;
  margin-right: 1px;
}
.clipboard .caption {
  justify-content: flex-start;
  padding-left: 9.5px;
}

/* open drawings */
.file-tabs {
  display: flex;
  align-items: center;
  height: 16px;
  flex-shrink: 0;
  background-color: #20272e;
  border-bottom: 2px solid #393b47;
}
.start {
  width: 30px;
  padding-left: 12.5px;
}
.current {
  display: flex;
  align-items: center;
  justify-content: space-between;
  width: 96px;
  height: 12px;
  padding: 0 4px 0 7px;
  clip-path: polygon(4px 0, 100% 0, 92px 100%, 0 100%);
  background-color: #3b444f;
  color: #fff;
  font-weight: 600;
  font-size: 6.05px;
}
.current svg {
  width: 6px;
  height: 6px;
}
.new-tab {
  width: 18px;
  text-align: center;
  font-size: 10px;
  color: #fff;
}
.slash {
  width: 1px;
  height: 10px;
  transform: skewX(-20deg);
  background-color: #39434c;
}

/* drawing */
.drawing {
  height: 423px;
  flex-shrink: 0;
}
.plain {
  fill: none;
  stroke: #9c9c9c;
  stroke-width: 0.8;
}
.selected {
  fill: none;
  stroke: #5f82d0;
  stroke-width: 1.5;
}
.selected .outline {
  stroke: #5475c0;
  stroke-width: 1.8;
}
.selected .ticks {
  stroke-width: 1;
}
.selected .knob {
  fill: #5678c8;
}
.grips {
  fill: #2dc6e6;
}
.grips .base {
  fill: #2b80de;
}
.crosshair {
  fill: none;
  stroke: #b8b8b8;
  stroke-width: 0.9;
}
.crosshair .pointer {
  fill: #fff;
  stroke: none;
}
.mdi {
  fill: none;
  stroke: #ddd;
  stroke-width: 1.1;
}

/* layouts and status */
.layout-bar {
  display: flex;
  height: 17px;
  flex-shrink: 0;
  border-top: 1px solid #303740;
  background-color: #202830;
}
.layout-tabs {
  display: flex;
  align-items: center;
  width: 718px;
  padding: 0 0 1px 5px;
}
.layout-tabs span {
  position: relative;
  padding: 0 6px;
  line-height: 13px;
  font-size: 5.94px;
}
.layout-tabs span::after {
  content: "";
  position: absolute;
  right: 0;
  top: 2px;
  width: 1px;
  height: 9px;
  transform: skewX(-20deg);
  background-color: #39434c;
}
.layout-tabs .active {
  padding: 0 6px 0 8px;
  clip-path: polygon(4px 0, 100% 0, calc(100% - 4px) 100%, 0 100%);
  background-color: #3b444f;
  color: #fff;
  font-weight: 600;
}
.layout-tabs b {
  padding-left: 8px;
  font-size: 9px;
  color: #fff;
}
.status {
  display: flex;
  align-items: center;
}
.status svg {
  height: 16px;
}
.model-button {
  width: 25px;
  height: 13px;
  line-height: 13px;
  text-align: center;
  font-size: 6.3px;
  background-color: #35414d;
}
.scale {
  width: 10px;
}

/* taskbar */
.taskbar {
  display: flex;
  align-items: center;
  height: 20px;
  flex-shrink: 0;
  background: linear-gradient(90deg, #3b3b3b 0, #3b3b3b 600px, #282828 730px, #222 980px);
}
.windows {
  width: 9px;
  height: 9px;
  margin: 0 8px;
}
.search {
  display: flex;
  align-items: center;
  width: 147px;
  height: 20px;
  padding-left: 5px;
  background-color: #f2f2f2;
  color: #444;
  font-size: 7.1px;
}
.search span {
  width: 92px;
  padding-left: 6px;
}
.apps {
  display: flex;
  width: 604px;
}
.apps span {
  display: flex;
  align-items: center;
  justify-content: center;
  width: 25.1px;
  height: 20px;
  border-bottom: 1px solid transparent;
}
.apps svg {
  width: 14px;
  height: 14px;
}
.apps .open {
  border-bottom-color: #6ca9d4;
}
.apps .focused {
  background-color: #626262;
}
.tray {
  display: flex;
  align-items: center;
  color: #eee;
}
.tray svg {
  height: 14px;
}
.temp {
  width: 19px;
  padding-left: 3px;
  font-size: 6.8px;
}
.weather {
  width: 18px;
  margin-right: 12px;
  font-size: 7.4px;
}
.lang {
  width: 12px;
  font-size: 6.2px;
}
.clock {
  width: 35px;
  margin-left: 3px;
  text-align: center;
  font-size: 6.1px;
  line-height: 9px;
}
.notify {
  margin-left: 1px;
}
```
